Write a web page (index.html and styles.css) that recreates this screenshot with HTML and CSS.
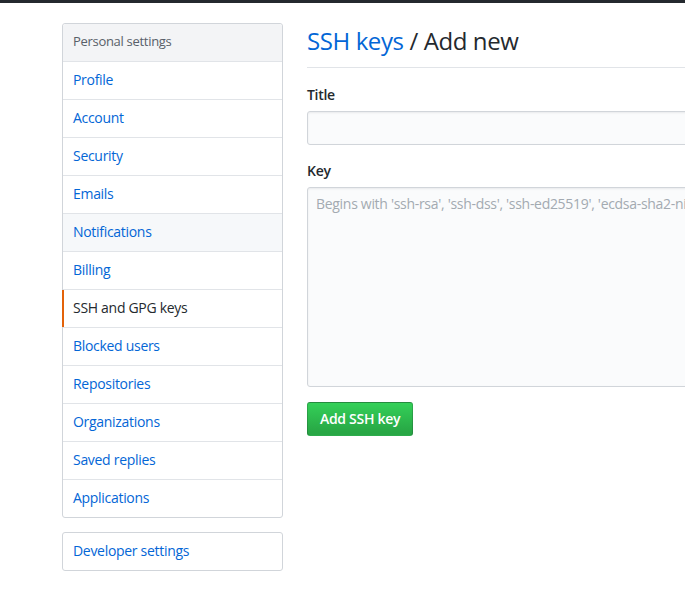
FILE: index.html
```html
<!DOCTYPE html>
<html lang="en">
<head>
<meta charset="utf-8">
<title>SSH keys / Add new</title>
<link rel="stylesheet" href="styles.css">
</head>
<body>
<div class="topbar"></div>
<div class="container">
  <aside class="sidebar">
    <nav class="menu">
      <div class="menu-heading">Personal settings</div>
      <a class="menu-item" href="#">Profile</a>
      <a class="menu-item" href="#">Account</a>
      <a class="menu-item" href="#">Security</a>
      <a class="menu-item" href="#">Emails</a>
      <a class="menu-item hover" href="#">Notifications</a>
      <a class="menu-item" href="#">Billing</a>
      <a class="menu-item selected" href="#">SSH and GPG keys</a>
      <a class="menu-item" href="#">Blocked users</a>
      <a class="menu-item" href="#">Repositories</a>
      <a class="menu-item" href="#">Organizations</a>
      <a class="menu-item" href="#">Saved replies</a>
      <a class="menu-item" href="#">Applications</a>
    </nav>
    <nav class="menu">
      <a class="menu-item" href="#">Developer settings</a>
    </nav>
  </aside>
  <main class="main">
    <div class="subhead">
      <h2 class="subhead-heading"><a href="#">SSH keys</a> / Add new</h2>
    </div>
    <form class="form">
      <div class="form-group">
        <label class="label" for="title">Title</label>
        <input class="input" id="title" type="text">
      </div>
      <div class="form-group">
        <label class="label" for="key">Key</label>
        <textarea class="input textarea" id="key" placeholder="Begins with 'ssh-rsa', 'ssh-dss', 'ssh-ed25519', 'ecdsa-sha2-nistp256', 'ecdsa-sha2-nistp384', or 'ecdsa-sha2-nistp521'"></textarea>
      </div>
      <button class="btn-primary" type="button">Add SSH key</button>
    </form>
  </main>
</div>
</body>
</html>
```
FILE: styles.css
```css
html, body {
  margin: 0;
  padding: 0;
  background: #fff;
  overflow: hidden;
}
body {
  font-family: "Open Sans", "Noto Sans", "Liberation Sans", sans-serif;
  font-size: 14px;
  line-height: 1.5;
  letter-spacing: -0.3px;
  color: #24292e;
}
.topbar {
  height: 3px;
  background: #24292e;
}
.container {
  display: flex;
  gap: 24px;
  padding: 20px 0 0 62px;
  width: 1200px;
}
.sidebar {
  flex: 0 0 221px;
  display: flex;
  flex-direction: column;
  gap: 14px;
}
.menu {
  display: flex;
  flex-direction: column;
  border: 1px solid #d1d5da;
  border-radius: 3px;
  background: #fff;
}
.menu-heading,
.menu-item {
  position: relative;
  display: block;
  padding: 7px 10px 9px;
  line-height: 21px;
  border-bottom: 1px solid #e1e4e8;
  text-decoration: none;
}
.menu .menu-item:last-child {
  border-bottom: 0;
}
.menu-heading {
  font-size: 13px;
  background: #f3f4f6;
  color: #586069;
  border-radius: 3px 3px 0 0;
}
.menu-item {
  color: #0366d6;
}
.menu-item.hover {
  background: #f6f8fa;
}
.menu-item.selected {
  color: #24292e;
}
.menu-item.selected::before {
  content: "";
  position: absolute;
  left: -1px;
  top: 0;
  bottom: 0;
  width: 2px;
  background: #e36209;
}
.main {
  flex: 0 0 900px;
}
.subhead {
  padding-bottom: 8px;
  margin-bottom: 16px;
  border-bottom: 1px solid #e1e4e8;
}
.subhead-heading {
  margin: 0;
  font-size: 24px;
  font-weight: 400;
  line-height: 36px;
  letter-spacing: -0.4px;
}
.subhead-heading a {
  color: #0366d6;
  text-decoration: none;
}
.form-group {
  margin-bottom: 15px;
}
.label {
  display: block;
  font-weight: 600;
  line-height: 21px;
  margin-bottom: 6px;
}
.input {
  display: block;
  box-sizing: border-box;
  width: 100%;
  height: 34px;
  padding: 6px 8px;
  font-family: inherit;
  font-size: 14px;
  line-height: 20px;
  letter-spacing: inherit;
  color: #24292e;
  background: #fafbfc;
  border: 1px solid #d1d5da;
  border-radius: 3px;
  box-shadow: inset 0 1px 2px rgba(27, 31, 35, 0.075);
  outline: none;
}
.textarea {
  height: 200px;
  resize: none;
}
.textarea::placeholder {
  color: #a3aab1;
}
.btn-primary {
  display: inline-block;
  box-sizing: border-box;
  height: 34px;
  padding: 6px 12px;
  font-family: inherit;
  font-size: 14px;
  font-weight: 600;
  line-height: 20px;
  letter-spacing: inherit;
  color: #fff;
  background: linear-gradient(-180deg, #34d058 0%, #28a745 90%);
  border: 1px solid rgba(27, 31, 35, 0.2);
  border-radius: 3px;
  cursor: pointer;
}
```
